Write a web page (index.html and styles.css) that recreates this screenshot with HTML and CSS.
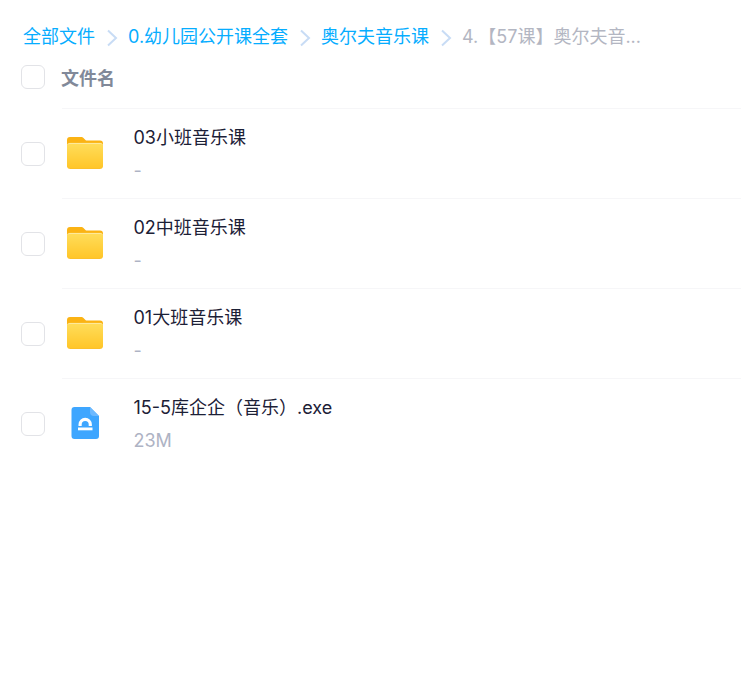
FILE: index.html
```html
<!DOCTYPE html>
<html lang="zh-CN">
<head>
<meta charset="utf-8">
<title>文件列表</title>
<link rel="stylesheet" href="styles.css">
</head>
<body>
<nav class="crumbs">
  <a class="crumb">全部文件</a>
  <svg class="sep" viewBox="0 0 12 18"><path d="M2 1.5 10 9 2 16.500"/></svg>
  <a class="crumb">0.幼儿园公开课全套</a>
  <svg class="sep" viewBox="0 0 12 18"><path d="M2 1.5 10 9 2 16.500"/></svg>
  <a class="crumb">奥尔夫音乐课</a>
  <svg class="sep" viewBox="0 0 12 18"><path d="M2 1.5 10 9 2 16.500"/></svg>
  <span class="crumb current">4.【57课】奥尔夫音...</span>
</nav>
<div class="head">
  <span class="check"></span>
  <span class="head-label">文件名</span>
</div>
<ul class="list">
  <li class="row">
    <span class="check"></span>
    <svg class="icon" viewBox="0 0 36 32"><use href="#folder"/></svg>
    <div class="info"><div class="name">03小班音乐课</div><div class="meta">-</div></div>
  </li>
  <li class="row">
    <span class="check"></span>
    <svg class="icon" viewBox="0 0 36 32"><use href="#folder"/></svg>
    <div class="info"><div class="name">02中班音乐课</div><div class="meta">-</div></div>
  </li>
  <li class="row">
    <span class="check"></span>
    <svg class="icon" viewBox="0 0 36 32"><use href="#folder"/></svg>
    <div class="info"><div class="name">01大班音乐课</div><div class="meta">-</div></div>
  </li>
  <li class="row last">
    <span class="check"></span>
    <svg class="icon" viewBox="0 0 36 32">
      <path fill="#3ea6ff" d="M7.500 0H23l9 9v20a3 3 0 0 1-3 3H7.500a3 3 0 0 1-3-3V3a3 3 0 0 1 3-3z"/>
      <path fill="#6db9ff" d="M23 0l9 9h-5a4 4 0 0 1-4-4z"/>
      <path fill="#fff" d="M11.500 19v-1.500a6.700 6.700 0 0 1 13.400 0V19h-3.200v-1.500a3.500 3.500 0 0 0-7 0V19z"/>
      <rect x="11" y="20.500" width="14.500" height="2.800" fill="#fff"/>
    </svg>
    <div class="info"><div class="name">15-5库企企（音乐）.exe</div><div class="meta">23M</div></div>
  </li>
</ul>
<svg class="defs" width="0" height="0">
  <defs>
    <linearGradient id="fg" x1="0" y1="0" x2="0" y2="1">
      <stop offset="0" stop-color="#ffdd5a"/>
      <stop offset="1" stop-color="#ffc629"/>
    </linearGradient>
    <g id="folder">
      <path fill="#fbb314" d="M3 0h11c1.500 0 2.300.6 3.200 1.700L19 3.500h14a3 3 0 0 1 3 3V12H0V3a3 3 0 0 1 3-3z"/>
      <rect x="0" y="5.500" width="36" height="26.500" rx="3.500" fill="#fcc02a"/>
      <path fill="url(#fg)" d="M3 6.500h30a3 3 0 0 1 3 3V28a3 3 0 0 1-3 3H3a3 3 0 0 1-3-3V9.500a3 3 0 0 1 3-3z"/>
      <path fill="#fee99a" d="M3 6h30a3 3 0 0 1 3 3v.5a2.500 2.500 0 0 0-2.500-2.500h-31A2.500 2.500 0 0 0 0 9.500V9a3 3 0 0 1 3-3z"/>
    </g>
  </defs>
</svg>
</body>
</html>
```
FILE: styles.css
```css
* { box-sizing: border-box; }
html, body { margin: 0; padding: 0; background: #fff; }
body {
  font-family: Inter, "Noto Sans CJK SC", sans-serif;
  font-size: 18px;
  overflow: hidden;
}
.crumbs {
  display: flex;
  align-items: center;
  height: 24px;
  margin: 25px 0 0 23px;
  line-height: 24px;
  white-space: nowrap;
}
.crumb { color: #06adff; }
.current { color: #b3b6c2; }
.sep {
  width: 12px;
  height: 18px;
  margin: 2px 10px 0 11px;
  fill: none;
  stroke: #c8dcf5;
  stroke-width: 2;
}
.head {
  display: flex;
  align-items: center;
  height: 24px;
  margin: 16px 0 19px 21px;
}
.head-label { margin-left: 16px; font-weight: 700; color: #818999; }
.check {
  flex: none;
  width: 24px;
  height: 24px;
  border: 1px solid #e2e3e7;
  border-radius: 6px;
  background: #fff;
}
.list { list-style: none; margin: 0; padding: 0; }
.row {
  position: relative;
  display: flex;
  align-items: center;
  height: 90px;
  padding-left: 21px;
}
.row .check { margin-top: 2px; }
.row::before {
  content: "";
  position: absolute;
  left: 62px;
  right: 0;
  top: 0;
  border-top: 1px solid #f6f6f8;
}
.row.last::after {
  content: "";
  position: absolute;
  left: 62px;
  right: 0;
  bottom: -1px;
  border-top: 1px solid #f6f6f8;
}
.icon { flex: none; width: 36px; height: 32px; margin: 0 31px 0 22px; }
.info { align-self: flex-start; padding-top: 17px; margin-left: -0.5px; }
.name { height: 24px; line-height: 24px; padding-top: 1px; color: #1c2036; }
.meta { margin-top: 10px; height: 24px; line-height: 24px; color: #aeb3c4; }
.defs { position: absolute; }
```
